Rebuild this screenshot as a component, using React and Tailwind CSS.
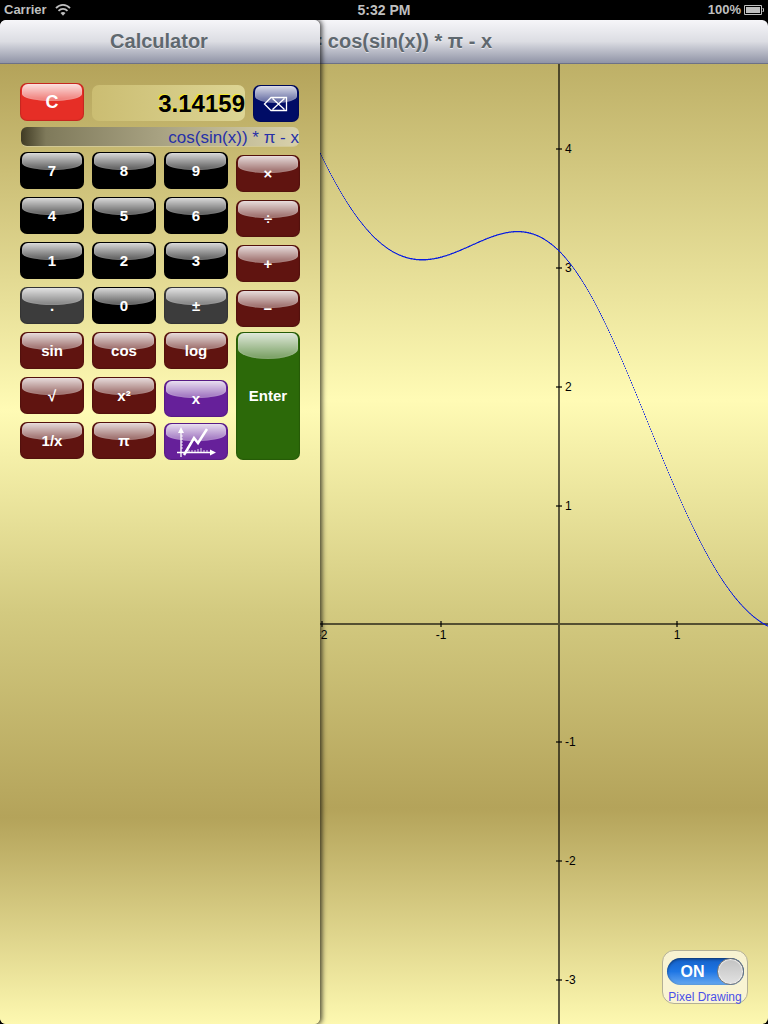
import React from "react";

const ORIGIN_X = 559;
const ORIGIN_Y = 560;
const UNIT = 119;

const f = (x) => Math.cos(Math.sin(x)) * Math.PI - x;

const curve = (() => {
  let d = "";
  for (let px = 300; px < 768; px += 1) {
    const y = (ORIGIN_Y - f((px - ORIGIN_X) / 118.5) * 118.7 - 0.3).toFixed(1);
    d += `M${px} ${y}h1v1.3h-1z`;
  }
  return d;
})();

const tones = {
  red: "bg-[#e62e26]",
  navy: "bg-[#000c66]",
  black: "bg-black",
  gray: "bg-[#3c3c3c]",
  maroon: "bg-[#601410]",
  purple: "bg-[#66209a]",
  green: "bg-[#2c6909]",
};

function Key({ tone, label, children, className = "h-[37px]", text = "text-[15px]" }) {
  return (
    <button
      type="button"
      aria-label={label}
      className={`relative flex w-full items-center justify-center overflow-hidden rounded-[7px] font-bold text-white shadow-[inset_0_0_1px_1px_rgba(0,0,0,0.15)] ${tones[tone]} ${text} ${className}`}
    >
      <span
        aria-hidden="true"
        className={`absolute inset-x-[2px] top-[1px] bg-linear-to-b from-white/85 to-white/35 shadow-[inset_0_0_2px_rgba(255,255,255,0.35)] ${tone === "green" ? "h-[26px] [border-radius:6px_6px_50%_50%/6px_6px_10px_10px]" : "h-[17px] [border-radius:6px_6px_50%_50%/6px_6px_7px_7px]"}`}
      />
      <span className="relative leading-5">{children}</span>
    </button>
  );
}

function PlotIcon() {
  return (
    <svg width="40" height="30" viewBox="0 0 40 30" fill="none" stroke="#fff" aria-hidden="true">
      <path d="M5 5v25M1 25.500h33" strokeWidth="1.300" />
      <path d="M5 0l3 6H2zM40 25.500l-6-3v6z" fill="#fff" stroke="none" />
      <path d="M5 9h2M5 12h2M5 15h2M5 18h2M5 21h2M10 25v-2M13 25v-2M16 25v-2M19 25v-2M22 25v-3M25 25v-4M28 25v-2M31 25v-2" strokeWidth="0.800" />
      <path d="M8 28L18 11l4 5L31 2" strokeWidth="2.500" />
    </svg>
  );
}

function Backspace() {
  return (
    <svg width="26" height="16" viewBox="0 0 26 16" fill="none" stroke="#fff" strokeWidth="1.300" aria-hidden="true">
      <path d="M1.500 8L8 1.500h15.500v13H8zM9.500 2.500l12 11M21.500 2.500l-12 11" />
    </svg>
  );
}

function StatusBar() {
  return (
    <div className="grid h-5 grid-cols-3 items-center bg-black px-1 text-[13px] leading-5 font-bold text-[#bfbfbf]">
      <div className="flex items-center gap-2">
        <span>Carrier</span>
        <svg width="16" height="12" viewBox="0 0 16 12" fill="none" stroke="#bfbfbf" strokeWidth="1.800" aria-hidden="true">
          <path d="M1 4.200C5-.200 11-.200 15 4.200M3.500 6.800c2.600-2.700 6.400-2.700 9 0" />
          <path d="M5.500 9c1.500-1.500 3.500-1.500 5 0L8 11.800z" fill="#bfbfbf" stroke="none" />
        </svg>
      </div>
      <span className="text-center text-[14px]">5:32 PM</span>
      <div className="flex items-center justify-end gap-[3px]">
        <span>100%</span>
        <svg width="20" height="10" viewBox="0 0 20 10" fill="none" aria-hidden="true">
          <path d="M.5.5h17v9H.5zM18.500 3.500h1v3h-1" stroke="#bfbfbf" />
          <path d="M2 2h14v6H2z" fill="#bfbfbf" />
        </svg>
      </div>
    </div>
  );
}

function TitleBar({ children }) {
  return (
    <header className="flex h-11 shrink-0 items-center justify-center border-b border-[#6d7186] bg-linear-to-b from-[#f6f6f9] via-[#dcdde3] to-[#9094a6] pr-[2px] pb-[2px]">
      <h1 className="text-[20px] leading-6 font-bold whitespace-nowrap text-[#5f686f] [text-shadow:0_1px_0_rgba(255,255,255,0.6)]">
        {children}
      </h1>
    </header>
  );
}

function Graph() {
  return (
    <svg
      className="absolute inset-0 h-full w-full"
      viewBox="0 0 768 960"
      preserveAspectRatio="xMinYMin slice"
      role="img"
      aria-label="Graph"
    >
      <path
        d={`M0 ${ORIGIN_Y}H768M${ORIGIN_X} 0V960`}
        stroke="#000"
        strokeOpacity="0.600"
        strokeWidth="2"
      />
      {[-2, -1, 1].map((n) => {
        const x = n === -2 ? 322 : ORIGIN_X + n * 118;
        return (
          <g key={n}>
            <path d={`M${x} ${ORIGIN_Y - 3}v6`} stroke="#000" strokeOpacity="0.600" strokeWidth="2" />
            <text x={x} y={ORIGIN_Y + 15} textAnchor="middle" fontSize="12">{n}</text>
          </g>
        );
      })}
      {[4, 3, 2, 1, -1, -2, -3].map((n) => {
        const y = n > 0 ? 561 - n * UNIT : 559 - n * UNIT;
        return (
          <g key={n}>
            <path d={`M${ORIGIN_X - 3} ${y}h6`} stroke="#000" strokeOpacity="0.600" strokeWidth="2" />
            <text x={ORIGIN_X + 6} y={y + 4} fontSize="12">{n}</text>
          </g>
        );
      })}
      <path d={curve} fill="#0a1ee0" />
    </svg>
  );
}

export default function App() {
  return (
    <div className="flex min-h-screen flex-col bg-black font-['Liberation_Sans',Arial,sans-serif]">
      <StatusBar />
      <div className="grid flex-1 grid-cols-[320px_1fr] grid-rows-1">
        <main className="col-span-2 col-start-1 row-start-1 flex flex-col overflow-hidden rounded-[6px]">
          <TitleBar>f(x) = cos(sin(x)) * π - x</TitleBar>
          <section className="relative flex flex-1 items-end justify-end bg-[linear-gradient(#beb067_0%,#fffbb5_35%,#d3ca80_57%,#b4a35a_77.500%,#fdf8b0_100%)] p-5">
            <Graph />
            <label className="relative flex h-[54px] w-[86px] flex-col items-center rounded-[12px] border border-[#b4b096] bg-[#faf6dc]/85 pt-[7px]">
              <input type="checkbox" role="switch" defaultChecked className="peer sr-only" />
              <span className="flex h-[27px] w-[77px] shrink-0 items-center justify-between rounded-full bg-linear-to-b from-[#1560c8] via-[#1e76e4] to-[#66a9f0] pl-[14px] shadow-[inset_0_1px_3px_rgba(0,0,0,0.5)]">
                <span className="text-[16px] leading-5 font-bold text-white">ON</span>
                <span className="size-[27px] rounded-full border border-[#777] bg-linear-to-b from-[#c2c2c2] to-[#e2e2e2] shadow-[inset_0_0_1px_1px_#eee]" />
              </span>
              <span className="mt-1 text-[12px] leading-4 whitespace-nowrap text-[#4a50e8]">Pixel Drawing</span>
            </label>
          </section>
        </main>

        <aside className="z-10 col-start-1 row-start-1 flex flex-col overflow-hidden rounded-[6px] shadow-[1px_0_5px_1px_rgba(0,0,0,0.7)]">
          <TitleBar>Calculator</TitleBar>
          <section className="flex-1 bg-[linear-gradient(#b4a35a_0%,#fffbb5_36%,#d3ca80_57%,#b4a35a_78.500%,#fdf8b0_100%)] px-5 pt-[19px]">
            <div className="mr-px flex items-start gap-2">
              <div className="w-16 shrink-0">
                <Key tone="red" className="h-[38px]" text="text-[18px]">C</Key>
              </div>
              <output className="mt-[2px] h-9 flex-1 rounded-[7px] bg-linear-to-r from-[#cbbd72] to-[#ddd594] text-right text-[24px] leading-[38px] font-bold text-black [text-shadow:-1px_-1px_0_#f2ea30]">
                3.14159
              </output>
              <div className="mt-[2px] w-[46px] shrink-0">
                <Key tone="navy" label="Delete"><Backspace /></Key>
              </div>
            </div>
            <div className="mx-px mt-[5px] h-5 rounded-[6px] border-b border-[#d2c995] bg-[linear-gradient(90deg,#403b24_0%,#7f7a5b_9%,#a8a282_50%,#d9d2ab_100%)] text-right text-[17px] leading-[22px] whitespace-nowrap text-[#2630a8]">
              cos(sin(x)) * π - x
            </div>

            <div className="mt-[5px] flex items-start gap-2">
              <div className="grid flex-1 auto-rows-[37px] grid-cols-3 gap-2">
                <Key tone="black">7</Key>
                <Key tone="black">8</Key>
                <Key tone="black">9</Key>
                <Key tone="black">4</Key>
                <Key tone="black">5</Key>
                <Key tone="black">6</Key>
                <Key tone="black">1</Key>
                <Key tone="black">2</Key>
                <Key tone="black">3</Key>
                <Key tone="gray">.</Key>
                <Key tone="black">0</Key>
                <Key tone="gray">±</Key>
                <Key tone="maroon">sin</Key>
                <Key tone="maroon">cos</Key>
                <Key tone="maroon">log</Key>
                <Key tone="maroon">√</Key>
                <Key tone="maroon">x²</Key>
                <div className="pt-[3px]">
                  <Key tone="purple">x</Key>
                </div>
                <Key tone="maroon">1/x</Key>
                <Key tone="maroon">π</Key>
                <div className="pt-[1px]">
                  <Key tone="purple" label="Graph"><PlotIcon /></Key>
                </div>
              </div>
              <div className="flex w-16 shrink-0 flex-col gap-2 pt-[3px]">
                <Key tone="maroon">×</Key>
                <Key tone="maroon">÷</Key>
                <Key tone="maroon">+</Key>
                <Key tone="maroon">−</Key>
                <div className="-mt-[3px]">
                  <Key tone="green" className="h-[128px]">Enter</Key>
                </div>
              </div>
            </div>
          </section>
        </aside>
      </div>
    </div>
  );
}
